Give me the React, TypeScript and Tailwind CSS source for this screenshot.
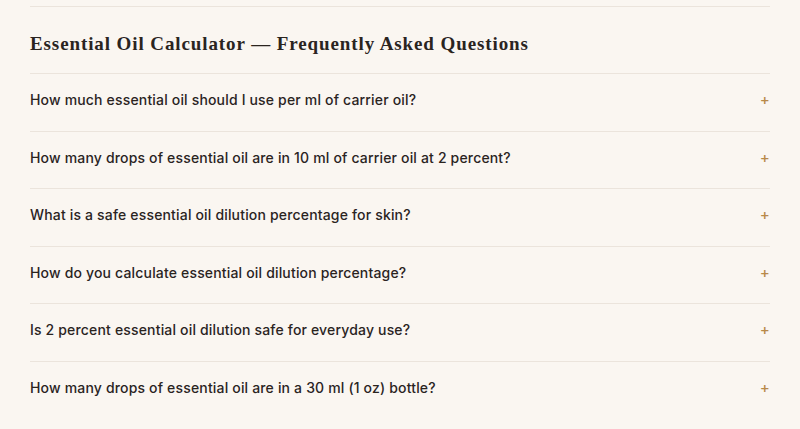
import React from 'react'

// FAQ entries for the calculator page
const questions = [
  "How much essential oil should I use per ml of carrier oil?",
  "How many drops of essential oil are in 10 ml of carrier oil at 2 percent?",
  "What is a safe essential oil dilution percentage for skin?",
  "How do you calculate essential oil dilution percentage?",
  "Is 2 percent essential oil dilution safe for everyday use?",
  "How many drops of essential oil are in a 30 ml (1 oz) bottle?",
]

const FaqSection = () => {
  return (
    <div className="min-h-screen bg-[#faf6f1] px-[30px] pt-[6px]">
      <section className="border-t border-[#ebe4dc]">
        <h2
          className="pt-[25px] pb-[17px] text-[19px] leading-[24px] font-bold tracking-[0.9px] text-[#2a241f]"
          style={{ fontFamily: '"Liberation Serif", serif' }}
        >
          Essential Oil Calculator — Frequently Asked Questions
        </h2>
        <div>
          {questions.map((q) => (
            <button
              key={q}
              className="flex w-full items-center justify-between border-t border-[#ebe4dc] pt-[18px] pb-[22px] text-left"
            >
              <span
                className="text-[14px] leading-[16.5px] font-medium tracking-[0.17px] text-[#2a241f]"
                style={{ fontFamily: 'Inter, sans-serif' }}
              >
                {q}
              </span>
              <span className="pr-[1px] text-[15px] leading-[16.5px] font-semibold text-[#b8894a]">+</span>
            </button>
          ))}
        </div>
      </section>
    </div>
  )
}

export default function App() {
  return <FaqSection />
}
